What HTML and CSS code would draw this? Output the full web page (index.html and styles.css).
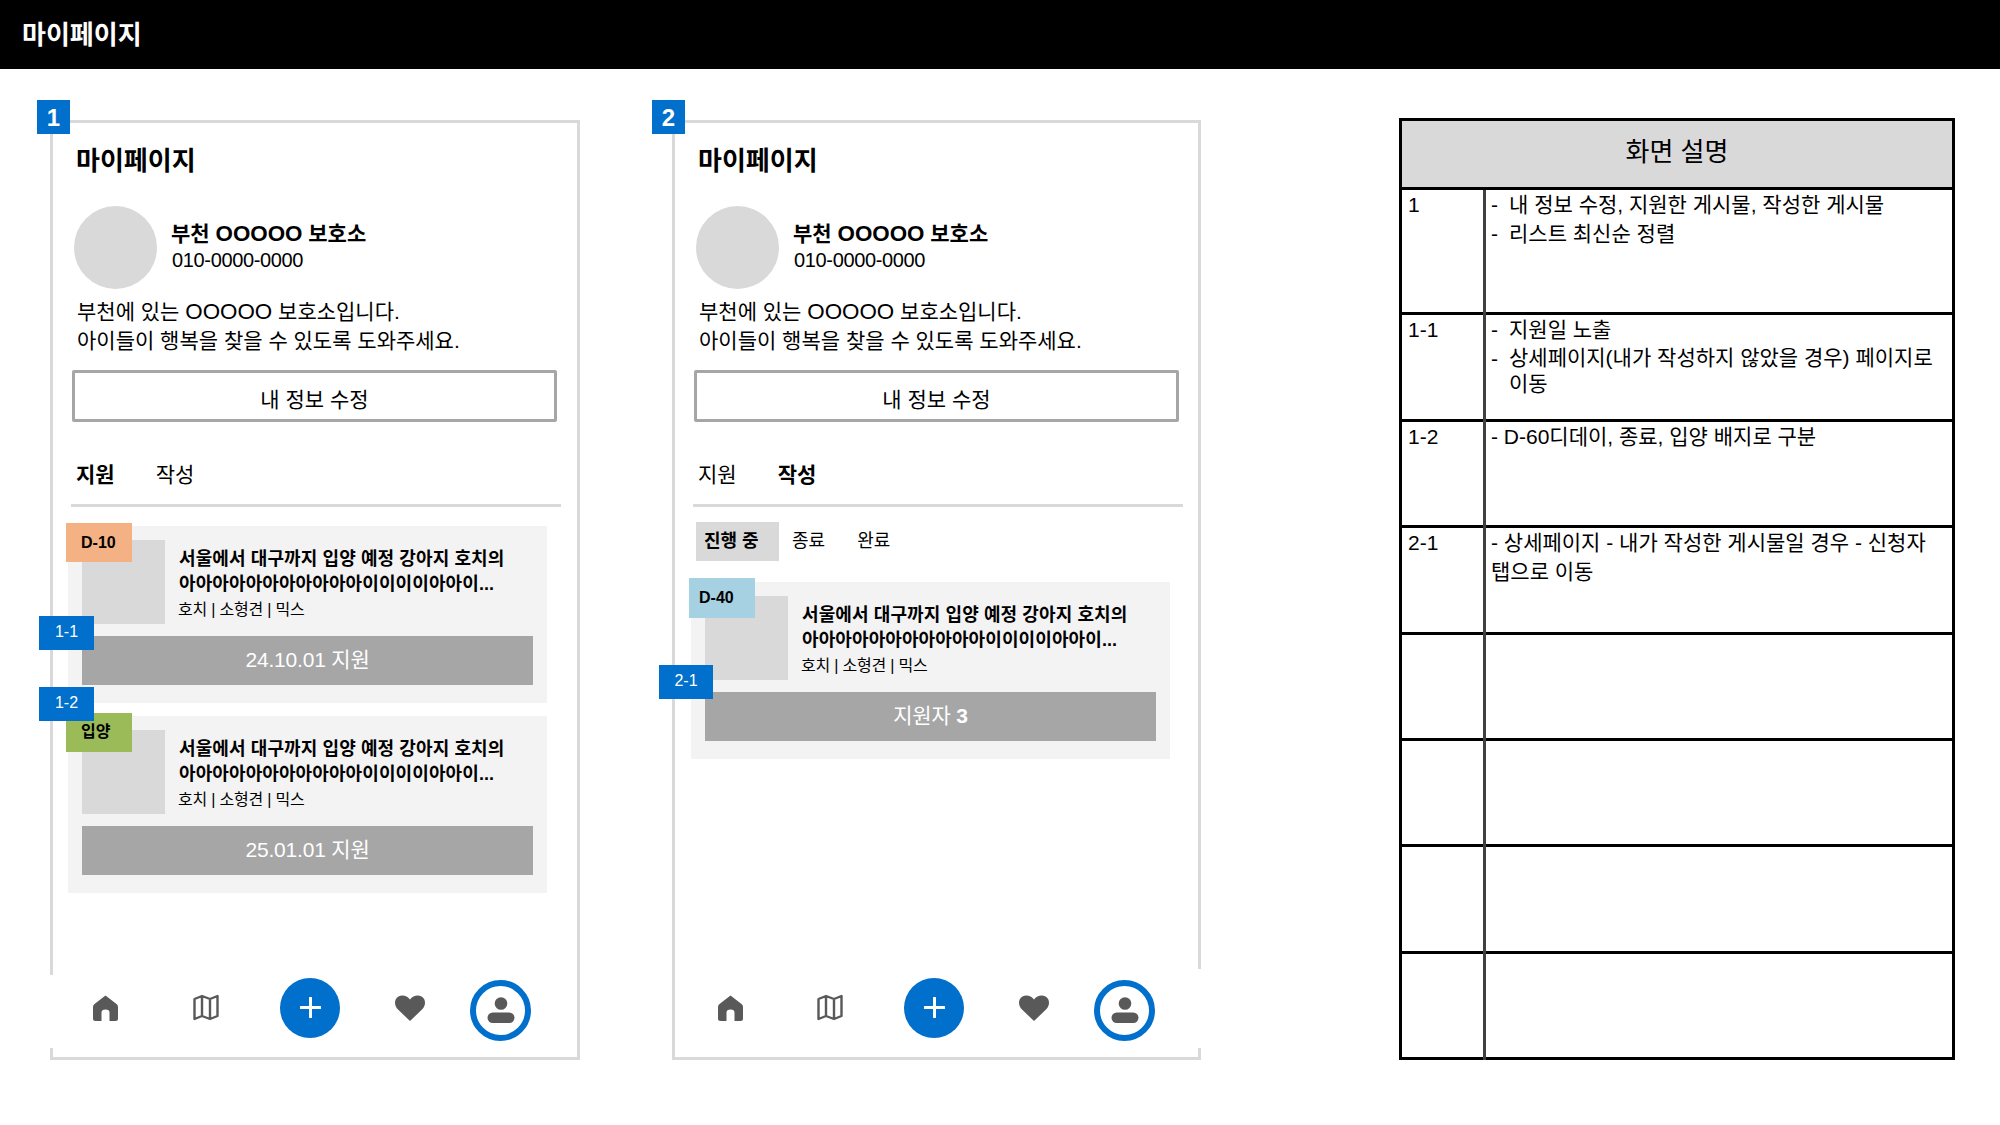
FILE: index.html
```html
<!DOCTYPE html>
<html>
<head>
    <title>마이페이지</title>
    <link rel="stylesheet" href="styles.css">
</head>
<body>
    <header class="top-bar">마이페이지</header>
    <main class="board">
        <section class="phone">
            <span class="screen-no">1</span>
            <h1 class="page-title">마이페이지</h1>
            <div class="profile">
                <div class="avatar"></div>
                <div class="profile-info">
                    <div class="profile-name">부천 <span class="masked">OOOOO</span> 보호소</div>
                    <div class="profile-phone">010-0000-0000</div>
                </div>
            </div>
            <p class="profile-desc">부천에 있는 <span class="masked">OOOOO</span> 보호소입니다.<br>아이들이 행복을 찾을 수 있도록 도와주세요.</p>
            <button type="button" class="edit-btn">내 정보 수정</button>
            <div class="tabs">
                <span class="tab active">지원</span>
                <span class="tab">작성</span>
            </div>
            <div class="card-list">
                <article class="card">
                    <span class="badge badge-orange">D-10</span>
                    <span class="tag tag-1-1">1-1</span>
                    <div class="card-top">
                        <div class="thumb"></div>
                        <div class="card-info">
                            <div class="card-title">서울에서 대구까지 입양 예정 강아지 호치의<br>아아아아아아아아아아아이이이이아아이...</div>
                            <div class="card-meta">호치 | 소형견 | 믹스</div>
                        </div>
                    </div>
                    <div class="card-bar">24.10.01 지원</div>
                </article>
                <article class="card">
                    <span class="badge badge-green">입양</span>
                    <span class="tag tag-1-2">1-2</span>
                    <div class="card-top">
                        <div class="thumb"></div>
                        <div class="card-info">
                            <div class="card-title">서울에서 대구까지 입양 예정 강아지 호치의<br>아아아아아아아아아아아이이이이아아이...</div>
                            <div class="card-meta">호치 | 소형견 | 믹스</div>
                        </div>
                    </div>
                    <div class="card-bar">25.01.01 지원</div>
                </article>
            </div>
            <nav class="bottom-nav">
                <svg class="nav-home" viewBox="0 0 25 26"><path d="M12.5 .5 23.5 9Q25 10 25 12V23.5Q25 26 22.5 26H16.5V17.5Q16.5 14.5 12.5 14.5 8.5 14.5 8.5 17.5V26H2.5Q0 26 0 23.5V12Q0 10 1.5 9Z"/></svg>
                <svg class="nav-map" viewBox="0 0 26 27"><path d="M1.5 5 9 2 17 5 24.5 2V22L17 25 9 22 1.5 25ZM9 2V22M17 5V25"/></svg>
                <span class="nav-add"><svg viewBox="0 0 21 21"><path d="M10.5 1V20M1 10.5H20"/></svg></span>
                <svg class="nav-heart" viewBox="0 0 30 26"><path d="M15 26 3 14.5C-1 10.500-1 4.500 3 1.800 7 -.8 12 .5 15 4.500 18 .5 23 -.8 27 1.800 31 4.500 31 10.500 27 14.500Z"/></svg>
                <span class="nav-profile"><svg viewBox="0 0 28 26"><circle cx="14" cy="6.500" r="6.300"/><rect x="0.500" y="15.500" width="27" height="10.500" rx="5.200"/></svg></span>
            </nav>
        </section>

        <section class="phone phone-second">
            <span class="screen-no">2</span>
            <h1 class="page-title">마이페이지</h1>
            <div class="profile">
                <div class="avatar"></div>
                <div class="profile-info">
                    <div class="profile-name">부천 <span class="masked">OOOOO</span> 보호소</div>
                    <div class="profile-phone">010-0000-0000</div>
                </div>
            </div>
            <p class="profile-desc">부천에 있는 <span class="masked">OOOOO</span> 보호소입니다.<br>아이들이 행복을 찾을 수 있도록 도와주세요.</p>
            <button type="button" class="edit-btn">내 정보 수정</button>
            <div class="tabs">
                <span class="tab">지원</span>
                <span class="tab active">작성</span>
            </div>
            <div class="filters">
                <span class="filter active">진행 중</span>
                <span class="filter">종료</span>
                <span class="filter">완료</span>
            </div>
            <div class="card-list card-list-filtered">
                <article class="card">
                    <span class="badge badge-blue">D-40</span>
                    <span class="tag tag-2-1">2-1</span>
                    <div class="card-top">
                        <div class="thumb"></div>
                        <div class="card-info">
                            <div class="card-title">서울에서 대구까지 입양 예정 강아지 호치의<br>아아아아아아아아아아아이이이이아아이...</div>
                            <div class="card-meta">호치 | 소형견 | 믹스</div>
                        </div>
                    </div>
                    <div class="card-bar">지원자 <b>3</b></div>
                </article>
            </div>
            <nav class="bottom-nav">
                <svg class="nav-home" viewBox="0 0 25 26"><path d="M12.5 .5 23.5 9Q25 10 25 12V23.5Q25 26 22.5 26H16.5V17.5Q16.5 14.5 12.5 14.5 8.5 14.5 8.5 17.5V26H2.5Q0 26 0 23.5V12Q0 10 1.5 9Z"/></svg>
                <svg class="nav-map" viewBox="0 0 26 27"><path d="M1.5 5 9 2 17 5 24.5 2V22L17 25 9 22 1.5 25ZM9 2V22M17 5V25"/></svg>
                <span class="nav-add"><svg viewBox="0 0 21 21"><path d="M10.5 1V20M1 10.5H20"/></svg></span>
                <svg class="nav-heart" viewBox="0 0 30 26"><path d="M15 26 3 14.5C-1 10.500-1 4.500 3 1.800 7 -.8 12 .5 15 4.500 18 .5 23 -.8 27 1.800 31 4.500 31 10.500 27 14.500Z"/></svg>
                <span class="nav-profile"><svg viewBox="0 0 28 26"><circle cx="14" cy="6.500" r="6.300"/><rect x="0.500" y="15.500" width="27" height="10.500" rx="5.200"/></svg></span>
            </nav>
        </section>

        <table class="desc-table">
            <colgroup>
                <col class="col-no">
                <col>
            </colgroup>
            <thead>
                <tr><th colspan="2">화면 설명</th></tr>
            </thead>
            <tbody>
                <tr class="row-first">
                    <td>1</td>
                    <td>
                        <div class="item"><span>-</span><span>내 정보 수정, 지원한 게시물, 작성한 게시물</span></div>
                        <div class="item"><span>-</span><span>리스트 최신순 정렬</span></div>
                    </td>
                </tr>
                <tr>
                    <td>1-1</td>
                    <td>
                        <div class="item"><span>-</span><span>지원일 노출</span></div>
                        <div class="item"><span>-</span><span class="item-wrap">상세페이지(내가 작성하지 않았을 경우) 페이지로 이동</span></div>
                    </td>
                </tr>
                <tr>
                    <td>1-2</td>
                    <td>- D-60디데이, 종료, 입양 배지로 구분</td>
                </tr>
                <tr>
                    <td>2-1</td>
                    <td>- 상세페이지 - 내가 작성한 게시물일 경우 - 신청자 탭으로 이동</td>
                </tr>
                <tr><td></td><td></td></tr>
                <tr><td></td><td></td></tr>
                <tr><td></td><td></td></tr>
                <tr><td></td><td></td></tr>
            </tbody>
        </table>
    </main>
</body>
</html>
```

FILE: styles.css
```css
* {
    box-sizing: border-box;
}
body {
    margin: 0;
    background-color: white;
    color: #000;
    font-family: "Liberation Sans", "Noto Sans CJK KR", sans-serif;
}
.top-bar {
    height: 69px;
    padding-left: 22px;
    background-color: #000;
    color: white;
    font-size: 26px;
    font-weight: 700;
    line-height: 70px;
}
.board {
    display: flex;
    align-items: flex-start;
    padding: 51px 0 0 50px;
}

/* phone frames */
.phone {
    position: relative;
    display: flex;
    flex-direction: column;
    flex-shrink: 0;
    width: 530px;
    height: 940px;
    margin-right: 92px;
    padding: 0 19px;
    border: 3px solid #d9d9d9;
}
.phone-second {
    width: 529px;
    margin-right: 93px;
}
.screen-no {
    position: absolute;
    left: -16px;
    top: -23px;
    width: 33px;
    height: 34px;
    background-color: #0070cc;
    color: white;
    font-size: 24px;
    font-weight: 700;
    line-height: 36px;
    text-align: center;
}
.phone-second .screen-no {
    left: -23px;
}
.page-title {
    margin: 23px 0 0 4px;
    font-size: 26px;
    line-height: 30px;
}
.profile {
    display: flex;
    margin: 30px 0 0 2px;
}
.avatar {
    width: 83px;
    height: 83px;
    border-radius: 50%;
    background-color: #d9d9d9;
}
.profile-info {
    margin-left: 14px;
    padding-top: 14px;
}
.profile-name {
    font-size: 21px;
    font-weight: 700;
    line-height: 27px;
}
.masked {
    font-size: 1.065em;
}
.profile-phone {
    margin-left: 1px;
    font-size: 20px;
    letter-spacing: -0.35px;
    line-height: 27px;
}
.profile-desc {
    margin: 8px 0 0 5px;
    font-size: 21px;
    line-height: 29px;
}
.edit-btn {
    width: 485px;
    height: 52px;
    margin-top: 15px;
    padding: 3px 0 0 0;
    border: 3px solid #a6a6a6;
    border-radius: 2px;
    background-color: white;
    color: #000;
    font-family: inherit;
    font-size: 21px;
}
.tabs {
    display: flex;
    gap: 41px;
    width: 490px;
    margin: 38px 0 0 -1px;
    padding: 0 0 14px 5px;
    border-bottom: 3px solid #d9d9d9;
    font-size: 21px;
    line-height: 30px;
}
.tab.active {
    font-weight: 700;
}
.filters {
    display: flex;
    gap: 13px;
    margin: 15px 0 0 2px;
    font-size: 18px;
    line-height: 39px;
}
.filter {
    padding-right: 19px;
}
.filter.active {
    width: 83px;
    padding: 0 0 0 8px;
    background-color: #d9d9d9;
    font-weight: 700;
}
.card-list {
    display: flex;
    flex-direction: column;
    gap: 13px;
    width: 479px;
    margin: 19px 0 0 -4px;
}
.card-list-filtered {
    margin: 21px 0 0 -3px;
}
.card {
    position: relative;
    padding: 14px 14px 18px;
    background-color: #f3f3f3;
}
.card-top {
    display: flex;
}
.thumb {
    flex-shrink: 0;
    width: 83px;
    height: 84px;
    background-color: #d9d9d9;
}
.card-info {
    margin-left: 14px;
    padding-top: 6.5px;
}
.card-title {
    font-size: 18px;
    font-weight: 700;
    letter-spacing: 0.1px;
    line-height: 25.5px;
    white-space: nowrap;
}
.card-meta {
    margin: 1px 0 0 -1px;
    font-size: 16px;
    letter-spacing: -0.2px;
    line-height: 22px;
}
.card-bar {
    height: 49px;
    margin-top: 12px;
    background-color: #a6a6a6;
    color: white;
    font-size: 21px;
    letter-spacing: -0.2px;
    line-height: 47px;
    text-align: center;
}
.badge {
    position: absolute;
    left: -2px;
    top: -3px;
    width: 66px;
    height: 39px;
    padding-left: 15px;
    font-size: 16px;
    font-weight: 700;
    line-height: 39px;
}
.badge-orange {
    background-color: #f4b183;
}
.badge-green {
    background-color: #9bbb59;
    line-height: 37px;
}
.badge-blue {
    top: -4px;
    height: 40px;
    padding-left: 10px;
    background-color: #a5d1e3;
    line-height: 40px;
}
.tag {
    position: absolute;
    left: -29px;
    width: 55px;
    height: 34px;
    background-color: #0070cc;
    color: white;
    font-size: 16px;
    line-height: 32px;
    text-align: center;
    z-index: 1;
}
.tag-1-1 {
    top: 90px;
}
.tag-1-2 {
    top: -29px;
}
.tag-2-1 {
    left: -32px;
    top: 83px;
    width: 54px;
}

/* bottom nav */
.bottom-nav {
    display: flex;
    align-items: center;
    flex-shrink: 0;
    width: 527px;
    height: 73px;
    margin: auto 0 9px -22px;
    padding: 1px 0 9px 43px;
    background-color: white;
}
.phone-second .bottom-nav {
    width: 526px;
    height: 79px;
    margin-left: -19px;
    padding-top: 7px;
}
.bottom-nav svg {
    display: block;
}
.nav-home {
    width: 25px;
    height: 26px;
    fill: #595959;
}
.nav-map {
    width: 26px;
    height: 27px;
    margin-left: 75px;
    fill: none;
    stroke: #595959;
    stroke-width: 2.4;
    stroke-linejoin: round;
}
.phone-second .nav-map {
    margin-left: 74px;
}
.nav-add {
    display: flex;
    align-items: center;
    justify-content: center;
    width: 60px;
    height: 60px;
    margin-left: 61px;
    border-radius: 50%;
    background-color: #0070cc;
}
.nav-add svg {
    width: 21px;
    height: 21px;
    fill: none;
    stroke: white;
    stroke-width: 3;
    stroke-linecap: round;
}
.nav-heart {
    width: 30px;
    height: 26px;
    margin-left: 55px;
    fill: #595959;
}
.nav-profile {
    display: flex;
    align-items: center;
    justify-content: center;
    width: 61px;
    height: 61px;
    margin: 6px 0 0 45px;
    border: 6px solid #0070cc;
    border-radius: 50%;
}
.nav-profile svg {
    flex-shrink: 0;
    width: 28px;
    height: 26px;
    margin-top: -2px;
    fill: #595959;
}

/* description table */
.desc-table {
    width: 556px;
    height: 942px;
    margin: -2px 0 0 105px;
    border: 3px solid #000;
    border-collapse: collapse;
    table-layout: fixed;
    font-size: 21px;
    line-height: 29px;
}
.col-no {
    width: 84px;
}
.desc-table th {
    height: 69px;
    padding-bottom: 5px;
    border-bottom: 3px solid #000;
    background-color: #d9d9d9;
    font-size: 26px;
    font-weight: 400;
}
.desc-table td {
    height: 106px;
    padding: 0 5px;
    border-top: 3px solid #000;
    vertical-align: top;
}
.desc-table td:first-child {
    padding-left: 6px;
    border-right: 3px solid #404040;
}
.desc-table .row-first td {
    height: 125px;
    border-top: none;
}
.item {
    display: flex;
    gap: 11px;
}
.item-wrap {
    line-height: 26px;
    padding-top: 1px;
}
```
